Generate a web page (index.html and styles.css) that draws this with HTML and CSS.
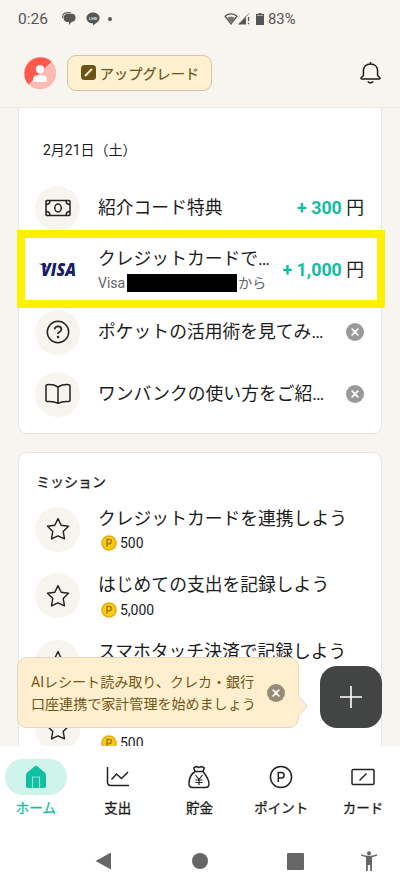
FILE: index.html
```html
<!DOCTYPE html>
<html lang="ja">
<head>
<meta charset="utf-8">
<meta name="viewport" content="width=device-width, initial-scale=1">
<title>ホーム</title>
<link rel="stylesheet" href="styles.css">
</head>
<body>
<svg class="defs" aria-hidden="true">
  <symbol id="star" viewBox="0 0 24 24"><path d="M12 1.6 15.2 8.3 22.5 9.3 17.2 14.4 18.5 21.9 12 18.8 5.5 21.9 6.8 14.4 1.5 9.3 8.8 8.3Z" fill="none" stroke="#222" stroke-width="1.4" stroke-linejoin="round"/></symbol>
  <symbol id="close" viewBox="0 0 18 18"><circle cx="9" cy="9" r="9" fill="currentColor"/><path d="m6.2 6.200 5.600 5.600m0-5.600-5.600 5.600" stroke="#fff" stroke-width="1.8" stroke-linecap="round"/></symbol>
  <symbol id="coin" viewBox="0 0 16 16"><circle cx="8" cy="8" r="7.8" fill="#e5ae0b"/><circle cx="8" cy="8" r="6.2" fill="#ffc917"/><path d="M6 11.5v-7h2.400a2.100 2.100 0 0 1 0 4.200H6" fill="none" stroke="#a67d08" stroke-width="1.5"/></symbol>
</svg>
<div class="screen">
  <header class="top">
    <div class="status">
      <span class="time">0:26</span>
      <svg class="chat" width="14" height="14" viewBox="0 0 14 14"><path d="M.8 6Q0 1 5 .7h4" fill="none" stroke="#666" stroke-width="1.2"/><path d="M5 1.800h4.500q4 0 4 4T9.500 10L7 13V10H5Q1.600 9.500 1.600 6T5 1.800Z" fill="#555"/></svg>
      <svg class="line" width="14" height="14" viewBox="0 0 14 14"><path d="M7 .5c3.800 0 6.600 2.400 6.600 5.500 0 3-3.600 5.500-6.600 7.400V11.400C3.200 11.400.4 9 .4 6S3.200.5 7 .5Z" fill="#555"/><text x="7" y="7.700" text-anchor="middle" class="line-text">LINE</text></svg>
      <span class="dot"></span>
      <span class="signals">
        <svg width="14" height="12" viewBox="0 0 14 12"><path d="M1 3.200Q7-1.400 13 3.200L7 11Z" fill="none" stroke="#555" stroke-width="1.300"/><path d="M2.800 5Q7 2 11.200 5L7 11Z" fill="#777"/></svg>
        <svg width="12" height="12" viewBox="0 0 12 12"><path d="M0 11.500 8 3.500v8Z" fill="#555"/><path d="m6 5.500 5-5" stroke="#777"/><path d="M10.500 4v4m0 1.800v1.500" stroke="#555" stroke-width="1.300"/></svg>
        <svg class="battery" width="8" height="12" viewBox="0 0 8 12"><path d="M2.500 0h3v1H8v11H0V1h2.500Z" fill="#555"/><path d="M1 2.500h6" stroke="#aaa"/></svg>
        <span>83%</span>
      </span>
    </div>
    <div class="account">
      <svg width="34" height="34" viewBox="0 0 34 34"><circle cx="17" cy="17" r="17" fill="#fff"/><circle cx="17" cy="17" r="16.300" fill="#ffb9b4"/><path d="M5.500 28.500A16.300 16.300 0 0 1 28.500 5.500Z" fill="#ff594b"/><circle cx="17" cy="13.300" r="4.200" fill="#fff"/><path d="M10 24.500Q10 19.200 14 19.200h6q4 0 4 5.300 0 1.500-1.500 1.500h-11Q10 26 10 24.500Z" fill="#fff"/></svg>
      <button class="upgrade"><svg width="15" height="15" viewBox="0 0 15 15"><rect width="15" height="15" rx="3.500" fill="#6b5416"/><path d="m4 11 7-7" stroke="#fff0cd" stroke-width="2"/></svg><span>アップグレード</span></button>
      <svg class="bell" width="22" height="24" viewBox="0 0 22 24"><path d="M11 1v2M3.900 14.500V9.800C3.900 5.500 7 3 11 3s7.100 2.500 7.100 6.800v4.700l2.200 2.200q.7 1.300-.8 1.300h-17q-1.500 0-.8-1.300Z" fill="none" stroke="#1b1b1b" stroke-width="1.500" stroke-linejoin="round"/><path d="M8.700 20.800q2.300 2.500 4.600 0" fill="none" stroke="#1b1b1b" stroke-width="1.500" stroke-linecap="round"/></svg>
    </div>
  </header>
  <main class="content">
    <section class="card activity">
      <h2 class="date">2月21日（土）</h2>
      <div class="row">
        <span class="disc"><svg width="26" height="18" viewBox="0 0 26 18"><g fill="none" stroke="#222" stroke-width="1.500"><rect x="1" y="1.500" width="24" height="15" rx="1"/><ellipse cx="13" cy="9" rx="3.200" ry="4"/><path d="M1 5.500q4 0 4-4m16 0q0 4 4 4M1 12.500q4 0 4 4m16 0q0-4 4-4"/></g></svg></span>
        <p class="label">紹介コード特典</p>
        <p class="amount"><b>+ 300</b> 円</p>
      </div>
      <div class="row highlighted">
        <span class="disc plain"><svg width="42" height="24" viewBox="0 0 42 24"><text x="4" y="18" textLength="35" lengthAdjust="spacingAndGlyphs" class="visa">VISA</text><path d="M1.500 5.700h7l1.500 4Q6.500 7 1.500 5.700Z" fill="#161b69"/></svg></span>
        <div class="label"><p>クレジットカードで…</p><p class="source">Visa<span class="mask"></span>から</p></div>
        <p class="amount"><b>+ 1,000</b> 円</p>
      </div>
      <div class="row">
        <span class="disc"><svg width="24" height="24" viewBox="0 0 24 24" fill="none" stroke="#222" stroke-width="1.500"><circle cx="12" cy="12" r="10.700"/><path d="M8.600 9.300C8.600 5.300 15.400 5.300 15.400 9.300c0 2.700-3.400 2.400-3.400 4.700" stroke-width="1.700"/><circle cx="12" cy="17" r=".5"/></svg></span>
        <p class="label">ポケットの活用術を見てみ…</p>
        <svg class="dismiss"><use href="#close"/></svg>
      </div>
      <div class="row">
        <span class="disc"><svg width="26" height="22" viewBox="0 0 26 22"><path d="M13 4Q8.500 1.200 2.300 1.700 1 1.800 1 3v14.500q0 1 1.300 1Q8.800 18 13 20.300 17.200 18 23.700 18.500q1.300 0 1.300-1V3q0-1.200-1.300-1.300Q17.500 1.200 13 4Zm0 0v16" fill="none" stroke="#222" stroke-width="1.500" stroke-linejoin="round"/></svg></span>
        <p class="label">ワンバンクの使い方をご紹…</p>
        <svg class="dismiss"><use href="#close"/></svg>
      </div>
    </section>
    <section class="card missions">
      <h2 class="heading">ミッション</h2>
      <div class="mission">
        <span class="disc"><svg class="star"><use href="#star"/></svg></span>
        <div class="label"><p>クレジットカードを連携しよう</p><p class="points"><svg><use href="#coin"/></svg>500</p></div>
      </div>
      <div class="mission">
        <span class="disc"><svg class="star"><use href="#star"/></svg></span>
        <div class="label"><p>はじめての支出を記録しよう</p><p class="points"><svg><use href="#coin"/></svg>5,000</p></div>
      </div>
      <div class="mission">
        <span class="disc"><svg class="star"><use href="#star"/></svg></span>
        <div class="label"><p>スマホタッチ決済で記録しよう</p><p class="points"></p></div>
      </div>
      <div class="mission">
        <span class="disc"><svg class="star"><use href="#star"/></svg></span>
        <div class="label"><p></p><p class="points"><svg><use href="#coin"/></svg>500</p></div>
      </div>
    </section>
    <aside class="tip">
      <p>AIレシート読み取り、クレカ・銀行<br>口座連携で家計管理を始めましょう</p>
      <svg class="dismiss"><use href="#close"/></svg>
      <svg class="tail" width="10" height="24" viewBox="0 0 10 24"><path d="M0 1.500 9 12 0 22.500Z" fill="#ffefcf"/><path d="m.5 2 8.500 10L.5 22" fill="none" stroke="#e2d8c1"/></svg>
    </aside>
    <button class="add" aria-label="追加"><svg width="24" height="24" viewBox="0 0 24 24"><path d="M12 1v22M1 12h22" stroke="#fff" stroke-width="1.600"/></svg></button>
  </main>
  <nav class="tabs">
    <a class="tab active"><span class="pill"><svg width="22" height="24" viewBox="0 0 22 24"><path d="M1 10q0-1.500 1.200-2.500L9.700 1.200q1.300-1 2.600 0l7.500 6.300Q21 8.500 21 10v11q0 2-2 2H3q-2 0-2-2Z" fill="#12bea0"/><path d="M7.500 23V12h7v11" fill="none" stroke="#8de4d4" stroke-width="1.200"/></svg></span>ホーム</a>
    <a class="tab"><span class="pill"><svg width="24" height="22" viewBox="0 0 24 22" fill="none" stroke="#222" stroke-width="1.500"><path d="M1.500 1v15q0 3.500 3.500 3.500h18M5.500 13.500l5-5.500 5 4.500L22 6"/></svg></span>支出</a>
    <a class="tab"><span class="pill"><svg width="22" height="24" viewBox="0 0 22 24" fill="none" stroke="#222" stroke-width="1.500" stroke-linejoin="round"><path d="M7 6.500 5.700 2.800 8.300 1.500 11 2.500l2.700-1 2.600 1.300L15 6.500Zm0 0C3 9 1 14 1 19q0 3.500 3.500 3.500h13q3.500 0 3.500-3.500 0-5-6-12.500"/><path d="m7.500 10 3.500 4.500 3.500-4.500M11 14.500V20m-3.500-5h7m-7 2.500h7" stroke-width="1.200"/></svg></span>貯金</a>
    <a class="tab"><span class="pill"><svg width="24" height="24" viewBox="0 0 24 24" fill="none" stroke="#222" stroke-width="1.500"><circle cx="12" cy="12" r="10.600"/><path d="M9.300 17V7.500h3a2.800 2.800 0 0 1 0 5.600h-3"/></svg></span>ポイント</a>
    <a class="tab"><span class="pill"><svg width="24" height="18" viewBox="0 0 24 18" fill="none" stroke="#222" stroke-width="1.500"><rect x="1" y="1.500" width="22" height="15" rx="1.200"/><path d="m8.500 12.500 7-7"/></svg></span>カード</a>
  </nav>
  <footer class="system">
    <svg width="16" height="18" viewBox="0 0 16 18"><path d="M.5 9 16 .5v17Z"/></svg>
    <svg width="16" height="16" viewBox="0 0 16 16"><circle cx="8" cy="8" r="8"/></svg>
    <svg width="17" height="17" viewBox="0 0 17 17"><rect width="17" height="17" rx="1"/></svg>
    <svg width="18" height="20" viewBox="0 0 18 20"><circle cx="9" cy="2.300" r="2"/><path d="m.8 4.500.5-1.300Q9 6.200 16.700 3.200l.5 1.500-5.200 1.500V20h-1.800v-6H7.800v6H6V6.200Z"/></svg>
  </footer>
</div>
</body>
</html>
```

FILE: styles.css
```css
* { box-sizing: border-box; }

body {
  margin: 0;
  font-family: Roboto, "Noto Sans CJK JP", sans-serif;
  color: #1c1c1c;
  background: #f8f4ef;
}

h2, p { margin: 0; font-weight: 400; }
button { font: inherit; padding: 0; }
svg { display: block; flex: none; }
.defs { width: 0; height: 0; position: absolute; }

.screen {
  width: 400px;
  height: 888px;
  display: grid;
  grid-template-rows: 108px 638px 86px 56px;
  overflow: hidden;
}

.top { border-bottom: 1px solid #ece8e3; }

.status {
  height: 38px;
  display: flex;
  align-items: center;
  padding-left: 18px;
  font-size: 15.500px;
  color: #555;
}
.time { width: 44px; }
.line { margin-left: 10px; }
.line-text { font-size: 4px; font-weight: 700; fill: #ddd; }
.dot { width: 4px; height: 4px; border-radius: 50%; background: #555; margin-left: 8px; }
.signals { display: flex; align-items: center; margin-left: 112px; font-size: 14.800px; }
.battery { margin: 0 4px 0 6px; }

.account { display: flex; align-items: center; height: 70px; padding: 0 20px 0 23px; }
.upgrade {
  width: 145px;
  height: 36px;
  margin-left: 10px;
  border: 1px solid #d2c5a5;
  border-radius: 9px;
  background: #fff0cf;
  color: #6b5416;
  display: flex;
  align-items: center;
  justify-content: center;
  gap: 4px;
  padding-bottom: 1px;
  font-size: 14.200px;
  -webkit-text-stroke: .2px currentColor;
}
.upgrade svg { margin-left: 1px; }
.bell { margin: 0 0 0 auto; transform: translateX(-2.500px); }

.content { position: relative; overflow: hidden; padding: 0 18px; }

.card { width: 364px; background: #fff; border: 1px solid #e7e5e2; border-radius: 9px; }
.activity { height: 326px; border-top: 0; border-radius: 0 0 9px 9px; padding-top: 32px; }
.date { height: 37px; padding-left: 24px; font-size: 14px; line-height: 21px; }
.row { height: 62px; display: flex; align-items: center; padding: 0 17px 0 16px; }
.disc {
  width: 45px;
  height: 45px;
  flex: none;
  border-radius: 50%;
  background: #f8f4ef;
  display: flex;
  align-items: center;
  justify-content: center;
}
.plain { background: none; }
.label { margin-left: 18px; font-size: 17.800px; line-height: 26px; white-space: nowrap; }
.amount { margin-left: auto; font-size: 17.800px; line-height: 26px; white-space: nowrap; }
.amount b { font-weight: 700; color: #12bea0; }
.dismiss { width: 18px; height: 18px; color: #999; margin-left: auto; }
.highlighted { position: relative; }
.highlighted::after {
  content: "";
  position: absolute;
  inset: -9px -4px -7px -2px;
  border: 8px solid #fff000;
}
.source { display: flex; align-items: center; font-size: 14px; line-height: 22px; color: #666; }
.mask { width: 110px; height: 18px; background: #000; margin: 0 1px 0 2px; }
.visa { font: italic 800 17px "Open Sans", sans-serif; fill: #161b69; }

.missions { height: 400px; margin-top: 18px; padding-top: 18px; }
.heading { height: 25px; padding-left: 17px; font-size: 14px; line-height: 22px; -webkit-text-stroke: .3px currentColor; }
.mission { height: 66.600px; display: flex; align-items: center; padding: 0 17px 0 16px; }
.mission .label { padding-top: 2px; }
.mission .label p:first-child { height: 26px; }
.star { width: 24px; height: 24px; }
.points { display: flex; align-items: center; gap: 3px; height: 23px; padding-left: 3px; font-size: 14px; line-height: 20px; }
.points svg { width: 16px; height: 16px; }

.tip {
  position: absolute;
  left: 17px;
  top: 549px;
  width: 282px;
  height: 71px;
  padding: 0 13px;
  display: flex;
  align-items: center;
  border: 1px solid #e2d8c1;
  border-radius: 10px;
  background: #ffefcf;
  color: #705715;
  font-size: 14.050px;
  line-height: 22px;
  white-space: nowrap;
}
.tip .dismiss { color: #988b75; }
.tail { position: absolute; left: 280px; top: 36px; }
.add {
  position: absolute;
  left: 320px;
  top: 558px;
  width: 62px;
  height: 62px;
  border: 0;
  border-radius: 17px;
  background: #424543;
  display: grid;
  place-items: center;
}

.tabs {
  display: grid;
  grid-template-columns: repeat(5, 81.800px);
  margin-left: -5px;
  padding-top: 13px;
  background: #fff;
}
.tab {
  display: flex;
  flex-direction: column;
  align-items: center;
  gap: 3px;
  font-size: 13.500px;
  line-height: 20px;
  -webkit-text-stroke: .3px currentColor;
}
.pill { width: 62px; height: 36px; border-radius: 18px; display: grid; place-items: center; }
.active { color: #12bea0; }
.active .pill { background: #cff4eb; }

.system {
  display: flex;
  align-items: center;
  background: #fff;
  padding: 2px 0 0 95px;
  fill: #666;
}
.system svg:nth-child(2) { margin-left: 81px; }
.system svg:nth-child(3) { margin-left: 79px; }
.system svg:nth-child(4) { margin-left: 56px; }
```
